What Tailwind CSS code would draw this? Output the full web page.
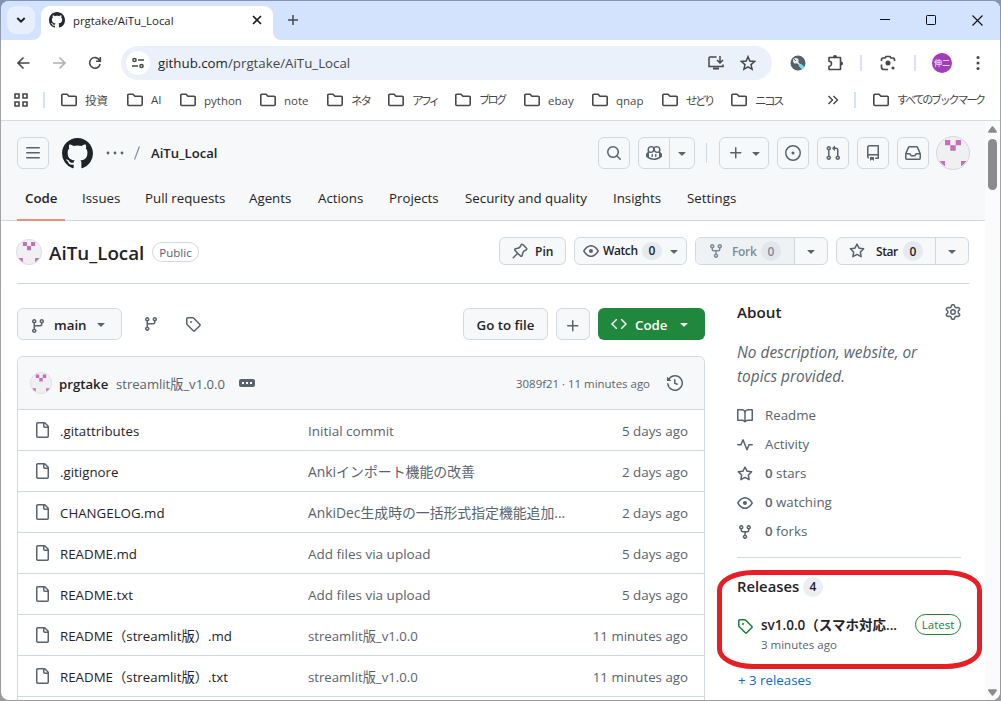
<!DOCTYPE html>
<html lang="ja">
<head>
<meta charset="utf-8">
<title>prgtake/AiTu_Local</title>
<script src="https://cdn.jsdelivr.net/npm/@tailwindcss/browser@4"></script>
</head>
<body class="w-[1001px] h-[701px] overflow-hidden bg-[#8f9499] font-['Open_Sans','Noto_Sans_CJK_JP',sans-serif] text-[13.3px] text-[#1f2328]">
<svg class="hidden">
  <symbol id="mark" viewBox="0 0 16 16"><path d="M8 0c4.42 0 8 3.58 8 8a8.013 8.013 0 0 1-5.45 7.59c-.4.08-.55-.17-.55-.38 0-.27.01-1.13.01-2.2 0-.75-.25-1.23-.54-1.48 1.78-.2 3.65-.88 3.65-3.95 0-.88-.31-1.59-.82-2.15.08-.2.36-1.02-.08-2.12 0 0-.67-.22-2.2.82-.64-.18-1.32-.27-2-.27-.68 0-1.36.09-2 .27-1.53-1.03-2.2-.82-2.2-.82-.44 1.1-.16 1.92-.08 2.12-.51.56-.82 1.28-.82 2.15 0 3.06 1.86 3.75 3.64 3.95-.23.2-.44.55-.51 1.07-.46.21-1.61.55-2.33-.66-.15-.24-.6-.83-1.23-.82-.67.01-.27.38.01.53.34.19.73.9.82 1.13.16.45.68 1.31 2.69.94 0 .67.01 1.3.01 1.49 0 .21-.15.45-.55.38A7.995 7.995 0 0 1 0 8c0-4.42 3.58-8 8-8Z"/></symbol>
  <symbol id="branch" viewBox="0 0 16 16"><path d="M9.5 3.25a2.25 2.25 0 1 1 3 2.122V6A2.5 2.5 0 0 1 10 8.5H6a1 1 0 0 0-1 1v1.128a2.251 2.251 0 1 1-1.5 0V5.372a2.25 2.25 0 1 1 1.5 0v1.836A2.493 2.493 0 0 1 6 7h4a1 1 0 0 0 1-1v-.628A2.25 2.25 0 0 1 9.5 3.25Zm-6 0a.75.75 0 1 0 1.5 0 .75.75 0 0 0-1.5 0Zm8.25-.75a.75.75 0 1 0 0 1.5.75.75 0 0 0 0-1.5ZM4.25 12a.75.75 0 1 0 0 1.5.75.75 0 0 0 0-1.5Z"/></symbol>
  <symbol id="tag" viewBox="0 0 16 16"><path d="M1 7.775V2.75C1 1.784 1.784 1 2.75 1h5.025c.464 0 .91.184 1.238.513l6.25 6.25a1.75 1.75 0 0 1 0 2.474l-5.026 5.026a1.75 1.75 0 0 1-2.474 0l-6.25-6.25A1.752 1.752 0 0 1 1 7.775Zm1.5 0c0 .066.026.13.073.177l6.25 6.25a.25.25 0 0 0 .354 0l5.025-5.025a.25.25 0 0 0 0-.354l-6.25-6.25a.25.25 0 0 0-.177-.073H2.75a.25.25 0 0 0-.25.25ZM6 5a1 1 0 1 1 0 2 1 1 0 0 1 0-2Z"/></symbol>
  <symbol id="file" viewBox="0 0 16 16"><path d="M2 1.75C2 .784 2.784 0 3.75 0h6.586c.464 0 .909.184 1.237.513l2.914 2.914c.329.328.513.773.513 1.237v9.586A1.75 1.75 0 0 1 13.25 16h-9.5A1.75 1.75 0 0 1 2 14.25Zm1.75-.25a.25.25 0 0 0-.25.25v12.5c0 .138.112.25.25.25h9.5a.25.25 0 0 0 .25-.25V6h-2.75A1.75 1.75 0 0 1 9 4.25V1.5Zm6.75.062V4.25c0 .138.112.25.25.25h2.688l-.011-.013-2.914-2.914-.013-.011Z"/></symbol>
  <symbol id="search" viewBox="0 0 16 16"><path d="M10.68 11.74a6 6 0 0 1-7.922-8.982 6 6 0 0 1 8.982 7.922l3.04 3.04a.749.749 0 0 1-.326 1.275.749.749 0 0 1-.734-.215ZM11.5 7a4.499 4.499 0 1 0-8.997 0A4.499 4.499 0 0 0 11.5 7Z"/></symbol>
  <symbol id="copilot" viewBox="0 0 16 16"><path d="M7.998 15.035c-4.562 0-7.873-2.914-7.998-3.749V9.338c.085-.628.677-1.686 1.588-2.065.013-.07.024-.143.036-.218.029-.183.06-.384.126-.612-.201-.508-.254-1.084-.254-1.656 0-.87.128-1.769.693-2.484.579-.733 1.494-1.124 2.724-1.261 1.206-.134 2.262.034 2.944.765.05.053.096.108.139.165.044-.057.094-.112.143-.165.682-.731 1.738-.899 2.944-.765 1.23.137 2.145.528 2.724 1.261.566.715.693 1.614.693 2.484 0 .572-.053 1.148-.254 1.656.066.228.098.429.126.612.012.076.024.148.037.218.924.385 1.522 1.471 1.591 2.095v1.872c0 .766-3.351 3.795-8.002 3.795Zm0-1.485c2.28 0 4.584-1.11 5.002-1.433V7.862l-.023-.116c-.49.21-1.075.291-1.727.291-1.146 0-2.059-.327-2.71-.991A3.222 3.222 0 0 1 8 6.303a3.24 3.24 0 0 1-.544.743c-.65.664-1.563.991-2.71.991-.652 0-1.236-.081-1.727-.291l-.023.116v4.255c.419.323 2.722 1.433 5.002 1.433ZM6.762 2.83c-.193-.206-.637-.413-1.682-.297-1.019.113-1.479.404-1.713.7-.247.312-.369.789-.369 1.554 0 .793.129 1.171.308 1.371.162.181.519.379 1.442.379.853 0 1.339-.235 1.638-.54.315-.322.527-.827.617-1.553.117-.935-.037-1.395-.241-1.614Zm4.155-.297c-1.044-.116-1.488.091-1.681.297-.204.219-.359.679-.242 1.614.091.726.303 1.231.618 1.553.299.305.784.54 1.638.54.922 0 1.28-.198 1.442-.379.179-.2.308-.578.308-1.371 0-.765-.123-1.242-.37-1.554-.233-.296-.693-.587-1.713-.7Z"/><path d="M6.25 9.037a.75.75 0 0 1 .75.75v1.501a.75.75 0 0 1-1.5 0V9.787a.75.75 0 0 1 .75-.75Zm4.25.75v1.501a.75.75 0 0 1-1.5 0V9.787a.75.75 0 0 1 1.5 0Z"/></symbol>
  <symbol id="issue" viewBox="0 0 16 16"><path d="M8 9.5a1.5 1.5 0 1 0 0-3 1.5 1.5 0 0 0 0 3Z"/><path d="M8 0a8 8 0 1 1 0 16A8 8 0 0 1 8 0ZM1.5 8a6.5 6.5 0 1 0 13 0 6.5 6.5 0 0 0-13 0Z"/></symbol>
  <symbol id="pr" viewBox="0 0 16 16"><path d="M1.5 3.25a2.25 2.25 0 1 1 3 2.122v5.256a2.251 2.251 0 1 1-1.5 0V5.372A2.25 2.25 0 0 1 1.5 3.25Zm5.677-.177L9.573.677A.25.25 0 0 1 10 .854V2.5h1A2.5 2.5 0 0 1 13.5 5v5.628a2.251 2.251 0 1 1-1.5 0V5a1 1 0 0 0-1-1h-1v1.646a.25.25 0 0 1-.427.177L7.177 3.427a.25.25 0 0 1 0-.354ZM3.75 2.5a.75.75 0 1 0 0 1.5.75.75 0 0 0 0-1.5Zm0 9.5a.75.75 0 1 0 0 1.5.75.75 0 0 0 0-1.5Zm8.25.75a.75.75 0 1 0 1.5 0 .75.75 0 0 0-1.5 0Z"/></symbol>
  <symbol id="repo" viewBox="0 0 16 16"><path d="M2 2.5A2.5 2.5 0 0 1 4.5 0h8.75a.75.75 0 0 1 .75.75v12.5a.75.75 0 0 1-.75.75h-2.5a.75.75 0 0 1 0-1.5h1.75v-2h-8a1 1 0 0 0-.714 1.7.75.75 0 1 1-1.072 1.05A2.495 2.495 0 0 1 2 11.5Zm10.5-1h-8a1 1 0 0 0-1 1v6.708A2.486 2.486 0 0 1 4.5 9h8ZM5 12.25a.25.25 0 0 1 .25-.25h3.5a.25.25 0 0 1 .25.25v3.25a.25.25 0 0 1-.4.2l-1.45-1.087a.249.249 0 0 0-.3 0L5.4 15.7a.25.25 0 0 1-.4-.2Z"/></symbol>
  <symbol id="inbox" viewBox="0 0 16 16"><path d="M2.8 2.06A1.75 1.75 0 0 1 4.41 1h7.18c.7 0 1.333.417 1.61 1.06l2.74 6.395c.04.093.06.194.06.295v4.5A1.75 1.75 0 0 1 14.25 15H1.75A1.75 1.75 0 0 1 0 13.25v-4.5c0-.101.02-.202.06-.295Zm1.61.44a.25.25 0 0 0-.23.152L1.887 8H4.75a.75.75 0 0 1 .6.3L6.625 10h2.75l1.275-1.7a.75.75 0 0 1 .6-.3h2.863L11.82 2.652a.25.25 0 0 0-.23-.152Zm10.09 7h-2.875l-1.275 1.7a.75.75 0 0 1-.6.3h-3.5a.75.75 0 0 1-.6-.3L4.375 9.5H1.5v3.75c0 .138.112.25.25.25h12.5a.25.25 0 0 0 .25-.25Z"/></symbol>
  <symbol id="pin" viewBox="0 0 16 16"><path d="m11.294.984 3.722 3.722a1.75 1.75 0 0 1-.504 2.826l-1.327.613a3.089 3.089 0 0 0-1.707 2.084l-.584 2.454c-.317 1.332-1.972 1.8-2.94.832L5.75 11.311 1.78 15.28a.749.749 0 1 1-1.06-1.06l3.969-3.97-2.204-2.204c-.968-.968-.5-2.623.832-2.94l2.454-.584a3.08 3.08 0 0 0 2.084-1.707l.613-1.327a1.75 1.75 0 0 1 2.826-.504ZM6.283 9.723l2.732 2.731a.25.25 0 0 0 .42-.119l.584-2.454a4.586 4.586 0 0 1 2.537-3.098l1.328-.613a.25.25 0 0 0 .072-.404l-3.722-3.722a.25.25 0 0 0-.404.072l-.613 1.328a4.584 4.584 0 0 1-3.098 2.537l-2.454.584a.25.25 0 0 0-.119.42l2.731 2.732Z"/></symbol>
  <symbol id="eye" viewBox="0 0 16 16"><path d="M8 2c1.981 0 3.671.992 4.933 2.078 1.27 1.091 2.187 2.345 2.637 3.023a1.62 1.62 0 0 1 0 1.798c-.45.678-1.367 1.932-2.637 3.023C11.67 13.008 9.981 14 8 14c-1.981 0-3.671-.992-4.933-2.078C1.797 10.83.88 9.576.43 8.898a1.62 1.62 0 0 1 0-1.798c.45-.677 1.367-1.931 2.637-3.022C4.33 2.992 6.019 2 8 2ZM1.679 7.932a.12.12 0 0 0 0 .136c.411.622 1.241 1.75 2.366 2.717C5.176 11.758 6.527 12.5 8 12.5c1.473 0 2.825-.742 3.955-1.715 1.124-.967 1.954-2.096 2.366-2.717a.12.12 0 0 0 0-.136c-.412-.621-1.242-1.75-2.366-2.717C10.824 4.242 9.473 3.5 8 3.5c-1.473 0-2.825.742-3.955 1.715-1.124.967-1.954 2.096-2.366 2.717ZM8 10a2 2 0 1 1-.001-3.999A2 2 0 0 1 8 10Z"/></symbol>
  <symbol id="fork" viewBox="0 0 16 16"><path d="M5 5.372v.878c0 .414.336.75.75.75h4.5a.75.75 0 0 0 .75-.75v-.878a2.25 2.25 0 1 1 1.5 0v.878a2.25 2.25 0 0 1-2.25 2.25h-1.5v2.128a2.251 2.251 0 1 1-1.5 0V8.5h-1.5A2.25 2.25 0 0 1 3.5 6.25v-.878a2.25 2.25 0 1 1 1.5 0ZM5 3.25a.75.75 0 1 0-1.5 0 .75.75 0 0 0 1.5 0Zm6.75.75a.75.75 0 1 0 0-1.5.75.75 0 0 0 0 1.5Zm-3 8.75a.75.75 0 1 0-1.5 0 .75.75 0 0 0 1.5 0Z"/></symbol>
  <symbol id="star" viewBox="0 0 16 16"><path d="M8 .25a.75.75 0 0 1 .673.418l1.882 3.815 4.21.612a.75.75 0 0 1 .416 1.279l-3.046 2.97.719 4.192a.751.751 0 0 1-1.088.791L8 12.347l-3.766 1.98a.75.75 0 0 1-1.088-.79l.72-4.194L.818 6.374a.75.75 0 0 1 .416-1.28l4.21-.611L7.327.668A.75.75 0 0 1 8 .25Zm0 2.445L6.615 5.5a.75.75 0 0 1-.564.41l-3.097.45 2.24 2.184a.75.75 0 0 1 .216.664l-.528 3.084 2.769-1.456a.75.75 0 0 1 .698 0l2.77 1.456-.53-3.084a.75.75 0 0 1 .216-.664l2.24-2.183-3.096-.45a.75.75 0 0 1-.564-.41L8 2.694Z"/></symbol>
  <symbol id="gear" viewBox="0 0 16 16"><path d="M8 0a8.2 8.2 0 0 1 .701.031C9.444.095 9.99.645 10.16 1.29l.288 1.107c.018.066.079.158.212.224.231.114.454.243.668.386.123.082.233.09.299.071l1.103-.303c.644-.176 1.392.021 1.82.63.27.385.506.792.704 1.218.315.675.111 1.422-.364 1.891l-.814.806c-.049.048-.098.147-.088.294.016.257.016.515 0 .772-.01.147.038.246.088.294l.814.806c.475.469.679 1.216.364 1.891a7.977 7.977 0 0 1-.704 1.217c-.428.61-1.176.807-1.82.63l-1.102-.302c-.067-.019-.177-.011-.3.071a5.909 5.909 0 0 1-.668.386c-.133.066-.194.158-.211.224l-.29 1.106c-.168.646-.715 1.196-1.458 1.26a8.006 8.006 0 0 1-1.402 0c-.743-.064-1.289-.614-1.458-1.26l-.289-1.106c-.018-.066-.079-.158-.212-.224a5.738 5.738 0 0 1-.668-.386c-.123-.082-.233-.09-.299-.071l-1.103.303c-.644.176-1.392-.021-1.82-.63a8.12 8.12 0 0 1-.704-1.218c-.315-.675-.111-1.422.363-1.891l.815-.806c.05-.048.098-.147.088-.294a6.214 6.214 0 0 1 0-.772c.01-.147-.038-.246-.088-.294l-.815-.806C.635 6.045.431 5.298.746 4.623a7.92 7.92 0 0 1 .704-1.217c.428-.61 1.176-.807 1.82-.63l1.102.302c.067.019.177.011.3-.071.214-.143.437-.272.668-.386.133-.066.194-.158.211-.224l.29-1.106C6.009.645 6.556.095 7.299.03 7.53.01 7.764 0 8 0Zm-.571 1.525c-.036.003-.108.036-.137.146l-.289 1.105c-.147.561-.549.967-.998 1.189-.173.086-.34.183-.5.29-.417.278-.97.423-1.529.27l-1.103-.303c-.109-.03-.175.016-.195.045-.22.312-.412.644-.573.99-.014.031-.021.11.059.19l.815.806c.411.406.562.957.53 1.456a4.709 4.709 0 0 0 0 .582c.032.499-.119 1.05-.53 1.456l-.815.806c-.081.08-.073.159-.059.19.162.346.353.677.573.989.02.03.085.076.195.046l1.102-.303c.56-.153 1.113-.008 1.53.27.161.107.328.204.501.29.447.222.85.629.997 1.189l.289 1.105c.029.109.101.143.137.146a6.6 6.6 0 0 0 1.142 0c.036-.003.108-.036.137-.146l.289-1.105c.147-.561.549-.967.998-1.189.173-.086.34-.183.5-.29.417-.278.97-.423 1.529-.27l1.103.303c.109.029.175-.016.195-.045.22-.313.411-.644.573-.99.014-.031.021-.11-.059-.19l-.815-.806c-.411-.406-.562-.957-.53-1.456a4.709 4.709 0 0 0 0-.582c-.032-.499.119-1.05.53-1.456l.815-.806c.081-.08.073-.159.059-.19a6.464 6.464 0 0 0-.573-.989c-.02-.03-.085-.076-.195-.046l-1.102.303c-.56.153-1.113.008-1.53-.27a4.44 4.44 0 0 0-.501-.29c-.447-.222-.85-.629-.997-1.189l-.289-1.105c-.029-.11-.101-.143-.137-.146a6.6 6.6 0 0 0-1.142 0ZM11 8a3 3 0 1 1-6 0 3 3 0 0 1 6 0ZM9.5 8a1.5 1.5 0 1 0-3.001.001A1.5 1.5 0 0 0 9.5 8Z"/></symbol>
  <symbol id="book" viewBox="0 0 16 16"><path d="M0 1.75A.75.75 0 0 1 .75 1h4.253c1.227 0 2.317.59 3 1.501A3.743 3.743 0 0 1 11.006 1h4.245a.75.75 0 0 1 .75.75v10.5a.75.75 0 0 1-.75.75h-4.507a2.25 2.25 0 0 0-1.591.659l-.622.621a.75.75 0 0 1-1.06 0l-.622-.621A2.25 2.25 0 0 0 5.258 13H.75a.75.75 0 0 1-.75-.75Zm7.251 10.324.004-5.073-.002-2.253A2.25 2.25 0 0 0 5.003 2.5H1.5v9h3.757a3.75 3.75 0 0 1 1.994.574ZM8.755 4.75l-.004 7.322a3.752 3.752 0 0 1 1.992-.572H14.5v-9h-3.495a2.25 2.25 0 0 0-2.25 2.25Z"/></symbol>
  <symbol id="pulse" viewBox="0 0 16 16"><path d="M6 2c.306 0 .582.187.696.471L10 10.731l1.304-3.26A.751.751 0 0 1 12 7h3.25a.75.75 0 0 1 0 1.5h-2.742l-1.812 4.528a.751.751 0 0 1-1.392 0L6 4.77 4.696 8.03A.75.75 0 0 1 4 8.5H.75a.75.75 0 0 1 0-1.5h2.742l1.812-4.529A.751.751 0 0 1 6 2Z"/></symbol>
  <symbol id="history" viewBox="0 0 16 16"><path d="m.427 1.927 1.215 1.215a8.002 8.002 0 1 1-1.6 5.685.75.75 0 1 1 1.493-.154 6.5 6.5 0 1 0 1.18-4.458l1.358 1.358A.25.25 0 0 1 3.896 6H.25A.25.25 0 0 1 0 5.75V2.104a.25.25 0 0 1 .427-.177ZM7.75 4a.75.75 0 0 1 .75.75v2.992l2.028.812a.75.75 0 0 1-.557 1.392l-2.5-1A.751.751 0 0 1 7 8.25v-3.5A.75.75 0 0 1 7.75 4Z"/></symbol>
  <symbol id="code" viewBox="0 0 16 16"><path d="m11.28 3.22 4.25 4.25a.75.75 0 0 1 0 1.06l-4.25 4.25a.749.749 0 0 1-1.275-.326.749.749 0 0 1 .215-.734L13.94 8l-3.72-3.72a.749.749 0 0 1 .326-1.275.749.749 0 0 1 .734.215Zm-6.56 0a.751.751 0 0 1 1.042.018.751.751 0 0 1 .018 1.042L2.06 8l3.72 3.72a.749.749 0 0 1-.326 1.275.749.749 0 0 1-.734-.215L.47 8.53a.75.75 0 0 1 0-1.06Z"/></symbol>
  <symbol id="plus" viewBox="0 0 16 16"><path d="M7.75 2a.75.75 0 0 1 .75.75V7h4.25a.75.75 0 0 1 0 1.5H8.5v4.25a.75.75 0 0 1-1.5 0V8.5H2.75a.75.75 0 0 1 0-1.5H7V2.75A.75.75 0 0 1 7.75 2Z"/></symbol>
  <symbol id="bars" viewBox="0 0 16 16"><path d="M1 2.75A.75.75 0 0 1 1.75 2h12.5a.75.75 0 0 1 0 1.5H1.75A.75.75 0 0 1 1 2.75Zm0 5A.75.75 0 0 1 1.75 7h12.5a.75.75 0 0 1 0 1.5H1.75A.75.75 0 0 1 1 7.75ZM1.75 12h12.5a.75.75 0 0 1 0 1.5H1.75a.75.75 0 0 1 0-1.5Z"/></symbol>
  <symbol id="tri" viewBox="0 0 16 16"><path d="m4.427 7.427 3.396 3.396a.25.25 0 0 0 .354 0l3.396-3.396A.25.25 0 0 0 11.396 7H4.604a.25.25 0 0 0-.177.427Z"/></symbol>
  <symbol id="folder" viewBox="0 0 18 14"><path fill="none" stroke="#474747" stroke-width="1.6" stroke-linejoin="round" d="M1.8 2.2a1 1 0 0 1 1-1h4.3l1.8 2h6.300a1 1 0 0 1 1 1v7.300a1 1 0 0 1-1 1H2.800a1 1 0 0 1-1-1Z"/></symbol>
  <symbol id="avatar" viewBox="0 0 34 34"><circle cx="17" cy="17" r="16.500" fill="#f0eff1" stroke="#d5d8dc"/><path fill="#c36fbd" d="M9 4h5.300v5.300h5.400V4H25v5.300h-5.300v5.400h-5.400V9.300H9ZM3.600 25H9v5.300a17 17 0 0 1-5.400-5.300ZM25 25h5.400a17 17 0 0 1-5.400 5.300Z"/></symbol>
</svg>

<div class="w-[1001px] h-[701px] pl-px pt-px bg-[linear-gradient(180deg,#8493b0,#8493b0_8px,#a3a6aa_60px,#9a9a9c)]">
<div class="w-[999px] h-[699px] rounded-lg overflow-hidden bg-white flex flex-col whitespace-nowrap">

  <!-- tab strip -->
  <div class="h-[39px] shrink-0 bg-[#d3e3fd] flex">
    <div class="ml-[6px] mt-[5px] size-7 rounded-[9px] bg-[#e7effd] flex items-center justify-center">
      <svg class="size-3" viewBox="0 0 12 12" fill="none" stroke="#1f1f1f" stroke-width="1.900"><path d="M2.300 4 6 7.700 9.700 4"/></svg>
    </div>
    <svg class="w-2 h-[39px] ml-[-2px]" viewBox="0 0 8 39"><path fill="#fff" d="M8 31v8H0a8 8 0 0 0 8-8Z"/></svg>
    <div class="mt-[5px] w-[232px] rounded-t-[9px] bg-white flex h-[34px]">
      <svg class="size-4 ml-2 mt-[6px] fill-[#24292f]"><use href="#mark"/></svg>
      <span class="ml-2 mt-[6px] leading-[18px] text-[11.400px] w-[178px]">prgtake/AiTu_Local</span>
      <svg class="size-3 mt-[8px]" viewBox="0 0 12 12" fill="none" stroke="#1f1f1f" stroke-width="1.600"><path d="m2 2 8 8M10 2l-8 8"/></svg>
    </div>
    <svg class="w-2 h-[39px]" viewBox="0 0 8 39"><path fill="#fff" d="M0 31v8h8a8 8 0 0 1-8-8Z"/></svg>
    <svg class="size-3 ml-[6px] mt-[13px]" viewBox="0 0 12 12" stroke="#474747" stroke-width="1.500"><path d="M1 6h10M6 1v10"/></svg>
    <svg class="ml-auto w-[110px] h-3 mr-[15px] mt-[13px]" viewBox="0 0 110 12" fill="none" stroke="#111"><path d="M5 5.500h10"/><rect x="51.500" y="1.500" width="9" height="9" rx=".8"/><path d="m97.500 1.500 10 10M107.500 1.500l-10 10" stroke-width="1.100"/></svg>
  </div>

  <!-- toolbar -->
  <div class="h-[46px] shrink-0 flex items-center">
    <svg class="w-[100px] h-4 ml-[13px]" viewBox="0 0 100 16" fill="none" stroke-width="1.600"><path stroke="#474747" d="M15.500 8H4M9.500 2.500 4 8l5.500 5.500"/><path stroke="#b0b0b0" d="M39 8h11.500M45.500 2.500 51 8l-5.500 5.500"/><path stroke="#474747" d="M85.500 5.200A5.300 5.300 0 1 0 86.100 9M86.300 2v4.200h-4.300"/></svg>
    <div class="ml-[7px] w-[651px] h-[34px] rounded-full bg-[#ebf1fa] flex items-center">
      <div class="ml-[5px] size-6 rounded-full bg-white flex items-center justify-center">
        <svg class="w-[14px] h-3" viewBox="0 0 14 12" fill="none" stroke="#474747" stroke-width="1.500"><circle cx="3.500" cy="3" r="1.600"/><path d="M7 3h6M1 9h6"/><circle cx="10.500" cy="9" r="1.600"/></svg>
      </div>
      <span class="ml-[8px] pt-[2px] w-[550px] text-[13.300px] text-[#474747]"><span class="text-[#1f1f1f]">github.com</span>/prgtake/AiTu_Local</span>
      <svg class="w-4 h-4" viewBox="0 0 16 16" fill="none" stroke="#474747" stroke-width="1.500"><path d="M8.500 2H2a1 1 0 0 0-1 1v8.500h14V9.500M12 1v6.500M9 5l3 3 3-3"/><path d="M5 13.500h6" stroke-width="2.200"/></svg>
      <svg class="size-4 ml-4" viewBox="0 0 16 16" fill="none" stroke="#474747" stroke-width="1.500"><path d="m8 1.700 1.800 4.400 4.800.4-3.600 3.100 1.100 4.700L8 11.800l-4.100 2.500L5 9.600 1.400 6.500l4.800-.4Z"/></svg>
    </div>
    <svg class="size-4 ml-[18px]" viewBox="0 0 16 16"><circle cx="8" cy="8" r="7.500" fill="#56606a"/><circle cx="5.800" cy="5.800" r="2.800" fill="#e8ecef"/><path stroke="#e8ecef" stroke-width="1.500" d="m7 7 3 3"/><path stroke="#56606a" d="m4 4 2 2"/><path stroke="#6fe3e6" stroke-width="3.500" stroke-linecap="round" d="m10.500 10.500 2 2"/></svg>
    <svg class="w-[17px] h-[17px] ml-[21px] mb-[2px]" viewBox="0 0 17 17" fill="none" stroke="#474747" stroke-width="1.600" stroke-linejoin="round"><path d="M2 3.500h11.500v12H2v-3.300a2.400 2.400 0 0 0 0-5Z"/><path fill="#474747" stroke="none" d="M6 3a2 2 0 0 1 4 0ZM14 7.500a2 2 0 0 1 0 4Z"/></svg>
    <div class="w-[2px] h-4 bg-[#d3e3fd] ml-[16px]"></div>
    <svg class="size-4 ml-[18px]" viewBox="0 0 16 16" fill="none" stroke="#474747" stroke-width="1.700"><path d="M1.500 6V4.500a1.500 1.500 0 0 1 1.500-1.500h2L6 1.500h4L11 3h2a1.500 1.500 0 0 1 1.500 1.500V6M1.500 9.500V12A2.500 2.500 0 0 0 4 14.500h4"/><circle cx="8" cy="8" r="2.500" fill="#474747" stroke="none"/><circle cx="13" cy="13" r="1.500" fill="#474747" stroke="none"/></svg>
    <div class="w-[2px] h-4 bg-[#d3e3fd] ml-[18px]"></div>
    <div class="ml-[16px] size-5 rounded-full bg-[#a43bb8] text-white text-[8px] leading-5 text-center">伸二</div>
    <svg class="w-1 h-4 ml-[24px]" viewBox="0 0 4 16" fill="#474747"><circle cx="2" cy="2.500" r="1.500"/><circle cx="2" cy="8" r="1.500"/><circle cx="2" cy="13.500" r="1.500"/></svg>
  </div>

  <!-- bookmarks -->
  <div class="h-[35px] shrink-0 flex items-center pb-[7px] text-[11.500px] text-[#474747] border-b border-[#d9dbde]">
    <svg class="size-[14px] ml-[13px]" viewBox="0 0 14 14" fill="none" stroke="#474747" stroke-width="1.600"><path d="M1 1h4v4H1ZM9 1h4v4H9ZM1 9h4v4H1ZM9 9h4v4H9Z"/></svg>
    <div class="w-[2px] h-4 bg-[#d3e3fd] ml-[15px] mr-[15px]"></div>
    <div class="flex items-center gap-[7px] w-[66px]"><svg class="w-[18px] h-[14px]"><use href="#folder"/></svg><span class="pt-[2px]">投資</span></div>
    <div class="flex items-center gap-[7px] w-[53px]"><svg class="w-[18px] h-[14px]"><use href="#folder"/></svg><span class="pt-px">AI</span></div>
    <div class="flex items-center gap-[7px] w-[80px]"><svg class="w-[18px] h-[14px]"><use href="#folder"/></svg><span class="pt-[2px]">python</span></div>
    <div class="flex items-center gap-[7px] w-[67px]"><svg class="w-[18px] h-[14px]"><use href="#folder"/></svg><span class="pt-[2px]">note</span></div>
    <div class="flex items-center gap-[7px] w-[61px]"><svg class="w-[18px] h-[14px]"><use href="#folder"/></svg><span class="tracking-[-2px] pt-[2px]">ネタ</span></div>
    <div class="flex items-center gap-[7px] w-[67px]"><svg class="w-[18px] h-[14px]"><use href="#folder"/></svg><span class="tracking-[-3px] pt-[2px]">アフィ</span></div>
    <div class="flex items-center gap-[7px] w-[69px]"><svg class="w-[18px] h-[14px]"><use href="#folder"/></svg><span class="tracking-[-2.400px] pt-[2px] text-[11px]">ブログ</span></div>
    <div class="flex items-center gap-[7px] w-[68px]"><svg class="w-[18px] h-[14px]"><use href="#folder"/></svg><span class="pt-[2px]">ebay</span></div>
    <div class="flex items-center gap-[7px] w-[70px]"><svg class="w-[18px] h-[14px]"><use href="#folder"/></svg><span class="pt-[2px]">qnap</span></div>
    <div class="flex items-center gap-[7px] w-[69px]"><svg class="w-[18px] h-[14px]"><use href="#folder"/></svg><span class="tracking-[-2.500px] pt-[2px]">せどり</span></div>
    <div class="flex items-center gap-[7px] w-[97px]"><svg class="w-[18px] h-[14px]"><use href="#folder"/></svg><span class="tracking-[-2.500px] pt-[2px]">ニコス</span></div>
    <svg class="w-3 h-3" viewBox="0 0 12 12" fill="none" stroke="#474747" stroke-width="1.400"><path d="m1.500 2 4 4-4 4M6.500 2l4 4-4 4"/></svg>
    <div class="w-[2px] h-4 bg-[#d3e3fd] ml-[15px] mr-[16px]"></div>
    <div class="flex items-center gap-[7px]"><svg class="w-[18px] h-[14px]"><use href="#folder"/></svg><span class="tracking-[-2.200px] pt-[2px] text-[11px]">すべてのブックマーク</span></div>
  </div>

  <div class="flex grow min-h-0">
    <div class="w-[984px] shrink-0 flex flex-col overflow-hidden">
      <!-- site header -->
      <header class="h-[100px] shrink-0 bg-[#f6f8fa] border-b border-[#d1d9e0]">
        <div class="h-16 pl-4 flex items-center fill-[#59636e]">
          <div class="size-8 border border-[#d1d9e0] rounded-md flex items-center justify-center"><svg class="size-4"><use href="#bars"/></svg></div>
          <svg class="size-[31px] ml-[13px] fill-[#1f2328]"><use href="#mark"/></svg>
          <svg class="w-[18px] h-1 ml-[13px]" viewBox="0 0 18 4"><circle cx="2" cy="2" r="1.400"/><circle cx="9" cy="2" r="1.400"/><circle cx="16" cy="2" r="1.400"/></svg>
          <svg class="w-[6px] h-[14px] ml-[10px]" viewBox="0 0 6 14" stroke="#818b98" stroke-width="1.200"><path d="M5.500.5.5 13.500"/></svg>
          <span class="ml-[11px] pt-[2px] w-[447px] font-semibold text-[13.100px]">AiTu_Local</span>
          <div class="size-8 border border-[#d1d9e0] rounded-md flex items-center justify-center"><svg class="size-4"><use href="#search"/></svg></div>
          <div class="ml-2 w-[57px] h-8 border border-[#d1d9e0] rounded-md flex">
            <div class="w-[31px] border-r border-[#d1d9e0] flex items-center justify-center"><svg class="size-4"><use href="#copilot"/></svg></div>
            <div class="grow flex items-center justify-center"><svg class="size-4"><use href="#tri"/></svg></div>
          </div>
          <div class="w-px h-5 bg-[#d1d9e0] ml-[11px] mr-3"></div>
          <div class="w-[50px] h-8 border border-[#d1d9e0] rounded-md flex items-center pl-2 gap-1"><svg class="size-4"><use href="#plus"/></svg><svg class="size-4"><use href="#tri"/></svg></div>
          <div class="ml-2 size-8 border border-[#d1d9e0] rounded-md flex items-center justify-center"><svg class="size-4"><use href="#issue"/></svg></div>
          <div class="ml-2 size-8 border border-[#d1d9e0] rounded-md flex items-center justify-center"><svg class="size-4"><use href="#pr"/></svg></div>
          <div class="ml-2 size-8 border border-[#d1d9e0] rounded-md flex items-center justify-center"><svg class="size-4"><use href="#repo"/></svg></div>
          <div class="ml-2 size-8 border border-[#d1d9e0] rounded-md flex items-center justify-center"><svg class="size-4"><use href="#inbox"/></svg></div>
          <svg class="size-[34px] ml-[7px]"><use href="#avatar"/></svg>
        </div>
        <nav class="h-9 pl-4 flex leading-[26px]">
          <div class="w-12 mr-[9px] pl-2 font-semibold border-b-2 border-[#e8917b]">Code</div>
          <span class="ml-2 w-[63px]">Issues</span>
          <span class="w-[104px]">Pull requests</span>
          <span class="w-[69px]">Agents</span>
          <span class="w-[71px]">Actions</span>
          <span class="w-[76px]">Projects</span>
          <span class="w-[148px]">Security and quality</span>
          <span class="w-[74px]">Insights</span>
          <span>Settings</span>
        </nav>
      </header>

      <!-- repository title -->
      <div class="ml-4 w-[952px] h-[63px] shrink-0 border-b border-[#d1d9e0] flex items-center text-[12px] font-semibold fill-[#59636e]">
        <svg class="size-[26px] ml-[-1px]"><use href="#avatar"/></svg>
        <span class="ml-[7px] pt-[3px] w-[103px] text-[18.800px]">AiTu_Local</span>
        <span class="w-[47px] h-5 rounded-full border border-[#d1d9e0] text-[#59636e] text-[11.500px] font-medium leading-[19px] text-center">Public</span>
        <div class="ml-auto mb-[2px] w-[67px] h-7 border border-[#d1d9e0] rounded-md bg-[#f6f8fa] flex items-center pl-3 gap-[7px]"><svg class="size-4"><use href="#pin"/></svg><span class="pt-px">Pin</span></div>
        <div class="ml-2 mb-[2px] w-[113px] h-7 border border-[#d1d9e0] rounded-md bg-[#f6f8fa] flex items-center pl-2 gap-1"><svg class="size-4"><use href="#eye"/></svg><span class="w-[35px] tracking-[-.4px]">Watch</span><span class="w-5 h-[18px] rounded-full bg-[#e6eaef] leading-[18px] text-center">0</span><svg class="size-4"><use href="#tri"/></svg></div>
        <div class="ml-2 mb-[2px] w-[133px] h-7 border border-[#d1d9e0] rounded-md bg-[#f6f8fa] flex overflow-hidden">
          <div class="w-[99px] bg-[#eff2f5] border-r border-[#d1d9e0] flex items-center pl-3 text-[#818b98] fill-[#818b98]"><svg class="size-4"><use href="#fork"/></svg><span class="ml-[8px] pt-px w-[29px] tracking-[-.3px]">Fork</span><span class="size-5 rounded-full bg-[#e3e7ec] leading-[21px] text-center">0</span></div>
          <div class="grow flex items-center justify-center"><svg class="size-4"><use href="#tri"/></svg></div>
        </div>
        <div class="ml-2 mb-[2px] w-[133px] h-7 border border-[#d1d9e0] rounded-md bg-[#f6f8fa] flex overflow-hidden">
          <div class="w-[99px] border-r border-[#d1d9e0] flex items-center pl-3"><svg class="size-4"><use href="#star"/></svg><span class="ml-[11px] pt-px w-[27px] tracking-[-.4px]">Star</span><span class="size-5 rounded-full bg-[#e6eaef] leading-[21px] text-center">0</span></div>
          <div class="grow flex items-center justify-center"><svg class="size-4"><use href="#tri"/></svg></div>
        </div>
      </div>

      <div class="flex grow min-h-0 pl-4 pt-6">
        <!-- files -->
        <main class="w-[688px] shrink-0">
          <div class="flex h-8 items-center font-semibold fill-[#59636e]">
            <div class="w-[105px] h-8 border border-[#d1d9e0] rounded-md bg-[#f6f8fa] flex items-center pl-3"><svg class="size-4 mt-[3px]"><use href="#branch"/></svg><span class="ml-2 pt-[3px] w-[39px]">main</span><svg class="size-4"><use href="#tri"/></svg></div>
            <svg class="size-4 ml-[21px]"><use href="#branch"/></svg>
            <svg class="size-4 ml-[26px]"><use href="#tag"/></svg>
            <div class="ml-auto w-[85px] h-8 border border-[#d1d9e0] rounded-md bg-[#f6f8fa] text-center leading-[33px]">Go to file</div>
            <div class="ml-2 w-[34px] h-8 border border-[#d1d9e0] rounded-md bg-[#f6f8fa] flex items-center justify-center pt-[3px]"><svg class="size-4"><use href="#plus"/></svg></div>
            <div class="ml-2 w-[107px] h-8 rounded-md bg-[#1f883d] text-white fill-white flex items-center pl-[13px]"><svg class="size-4"><use href="#code"/></svg><span class="ml-2 pt-[3px] w-[41px]">Code</span><svg class="size-4"><use href="#tri"/></svg></div>
          </div>
          <div class="mt-4 border border-[#d1d9e0] rounded-t-md text-[#59636e]">
            <div class="h-[52px] bg-[#f6f8fa] rounded-t-md flex items-center pl-3 fill-[#59636e]">
              <svg class="size-[22px]"><use href="#avatar"/></svg>
              <span class="ml-[7px] pt-[3px] w-[57px] font-semibold text-[#1f2328] text-[13.200px]">prgtake</span>
              <span class="w-[123px] pt-[3px] text-[13.100px]">streamlit版_v1.0.0</span>
              <span class="w-4 h-2 rounded-[2px] bg-[#59636e] flex items-center justify-center gap-[2px]"><i class="size-[2px] bg-white"></i><i class="size-[2px] bg-white"></i><i class="size-[2px] bg-white"></i></span>
              <span class="ml-auto pt-[2px] text-[11.450px]">3089f21 · 11 minutes ago</span>
              <svg class="size-4 ml-[17px] mr-[21px]"><use href="#history"/></svg>
            </div>
            <div class="h-[41px] border-t border-[#d1d9e0] flex items-center pl-4 pr-4 fill-[#59636e]"><svg class="size-4"><use href="#file"/></svg><span class="ml-[10px] pt-1 w-[248px] text-[#1f2328]">.gitattributes</span><span class="pt-[2px] text-[13.500px]">Initial commit</span><span class="ml-auto pt-[2px] text-[13.400px]">5 days ago</span></div>
            <div class="h-[41px] border-t border-[#d1d9e0] flex items-center pl-4 pr-4 fill-[#59636e]"><svg class="size-4"><use href="#file"/></svg><span class="ml-[10px] pt-1 w-[248px] text-[#1f2328]">.gitignore</span><span class="pt-[2px] text-[13.900px]">Ankiインポート機能の改善</span><span class="ml-auto pt-[2px] text-[13.400px]">2 days ago</span></div>
            <div class="h-[41px] border-t border-[#d1d9e0] flex items-center pl-4 pr-4 fill-[#59636e]"><svg class="size-4"><use href="#file"/></svg><span class="ml-[10px] pt-1 w-[248px] text-[#1f2328]">CHANGELOG.md</span><span class="pt-[2px] text-[13.850px]">AnkiDec生成時の一括形式指定機能追加...</span><span class="ml-auto pt-[2px] text-[13.400px]">2 days ago</span></div>
            <div class="h-[41px] border-t border-[#d1d9e0] flex items-center pl-4 pr-4 fill-[#59636e]"><svg class="size-4"><use href="#file"/></svg><span class="ml-[10px] pt-1 w-[248px] text-[#1f2328]">README.md</span><span class="pt-[2px] text-[13.500px]">Add files via upload</span><span class="ml-auto pt-[2px] text-[13.400px]">5 days ago</span></div>
            <div class="h-[41px] border-t border-[#d1d9e0] flex items-center pl-4 pr-4 fill-[#59636e]"><svg class="size-4"><use href="#file"/></svg><span class="ml-[10px] pt-1 w-[248px] text-[#1f2328]">README.txt</span><span class="pt-[2px] text-[13.500px]">Add files via upload</span><span class="ml-auto pt-[2px] text-[13.400px]">5 days ago</span></div>
            <div class="h-[41px] border-t border-[#d1d9e0] flex items-center pl-4 pr-4 fill-[#59636e]"><svg class="size-4"><use href="#file"/></svg><span class="ml-[10px] pt-1 w-[248px] text-[#1f2328]">README（streamlit版）.md</span><span class="pt-1 text-[13.200px]">streamlit版_v1.0.0</span><span class="ml-auto pt-1">11 minutes ago</span></div>
            <div class="h-[41px] border-t border-[#d1d9e0] flex items-center pl-4 pr-4 fill-[#59636e]"><svg class="size-4"><use href="#file"/></svg><span class="ml-[10px] pt-1 w-[248px] text-[#1f2328]">README（streamlit版）.txt</span><span class="pt-1 text-[13.200px]">streamlit版_v1.0.0</span><span class="ml-auto pt-1">11 minutes ago</span></div>
            <div class="h-[41px] border-t border-[#d1d9e0]"></div>
          </div>
        </main>

        <!-- sidebar -->
        <aside class="ml-8 w-[224px] shrink-0 text-[#59636e] fill-[#59636e]">
          <div class="h-6 mt-[-8px] flex items-center justify-between"><h2 class="text-[15.200px] font-semibold text-[#1f2328]">About</h2><svg class="size-4"><use href="#gear"/></svg></div>
          <p class="mt-[17px] italic text-[15.400px] leading-6">No description, website, or<br>topics provided.</p>
          <div class="mt-3 flex flex-col">
            <div class="h-[29px] flex items-center gap-3"><svg class="size-4"><use href="#book"/></svg>Readme</div>
            <div class="h-[29px] flex items-center gap-3"><svg class="size-4"><use href="#pulse"/></svg>Activity</div>
            <div class="h-[29px] flex items-center gap-3"><svg class="size-4"><use href="#star"/></svg><span><b class="font-semibold">0</b> stars</span></div>
            <div class="h-[29px] flex items-center gap-3"><svg class="size-4"><use href="#eye"/></svg><span><b class="font-semibold">0</b> watching</span></div>
            <div class="h-[29px] flex items-center gap-3"><svg class="size-4"><use href="#fork"/></svg><span><b class="font-semibold">0</b> forks</span></div>
          </div>
          <div class="mt-[11px] border-t border-[#d1d9e0] pt-[17px] relative">
            <div class="h-6 flex items-center"><h2 class="mb-[2px] text-[14.800px] font-semibold text-[#1f2328] w-[66px]">Releases</h2><span class="size-5 rounded-full bg-[#eceff2] text-[#1f2328] text-[12px] font-semibold leading-5 text-center">4</span></div>
            <div class="mt-4 flex">
              <svg class="size-4 mt-[3px] fill-[#1a7f37]"><use href="#tag"/></svg>
              <div class="ml-2 w-[154px]"><div class="font-semibold text-[#1f2328] text-[13.500px] leading-[21px]">sv1.0.0（スマホ対応...</div><div class="text-[11.500px] leading-[18px]">3 minutes ago</div></div>
              <span class="mt-[-1px] w-[46px] h-[21px] rounded-full border border-[#1a7f37] text-[#1a7f37] text-[11.500px] font-medium leading-[19px] text-center">Latest</span>
            </div>
            <div class="mt-[17px] ml-px text-[#0969da]">+ 3 releases</div>
            <div class="absolute left-[-20px] top-[12px] w-[265px] h-[99px] border-[5px] border-[#e61e26] rounded-[36px/20px]"></div>
          </div>
        </aside>
      </div>
    </div>

    <!-- scrollbar -->
    <div class="grow bg-[#fbfbfb] flex flex-col items-center">
      <svg class="w-[9px] h-[7px] mt-[5px]" viewBox="0 0 9 7" fill="#8b8b8b"><path d="M3.800.6a.9.9 0 0 1 1.400 0L8.800 5.300a.9.9 0 0 1-.7 1.400H.9a.9.9 0 0 1-.7-1.400Z"/></svg>
      <div class="w-[9px] h-[51px] rounded-full bg-[#8b8b8b] mt-[6px]"></div>
      <svg class="w-[9px] h-[7px] mt-auto mb-1 rotate-180" viewBox="0 0 9 7" fill="#8b8b8b"><path d="M3.800.6a.9.9 0 0 1 1.400 0L8.800 5.300a.9.9 0 0 1-.7 1.400H.9a.9.9 0 0 1-.7-1.400Z"/></svg>
    </div>
  </div>
</div>
</div>
</body>
</html>
